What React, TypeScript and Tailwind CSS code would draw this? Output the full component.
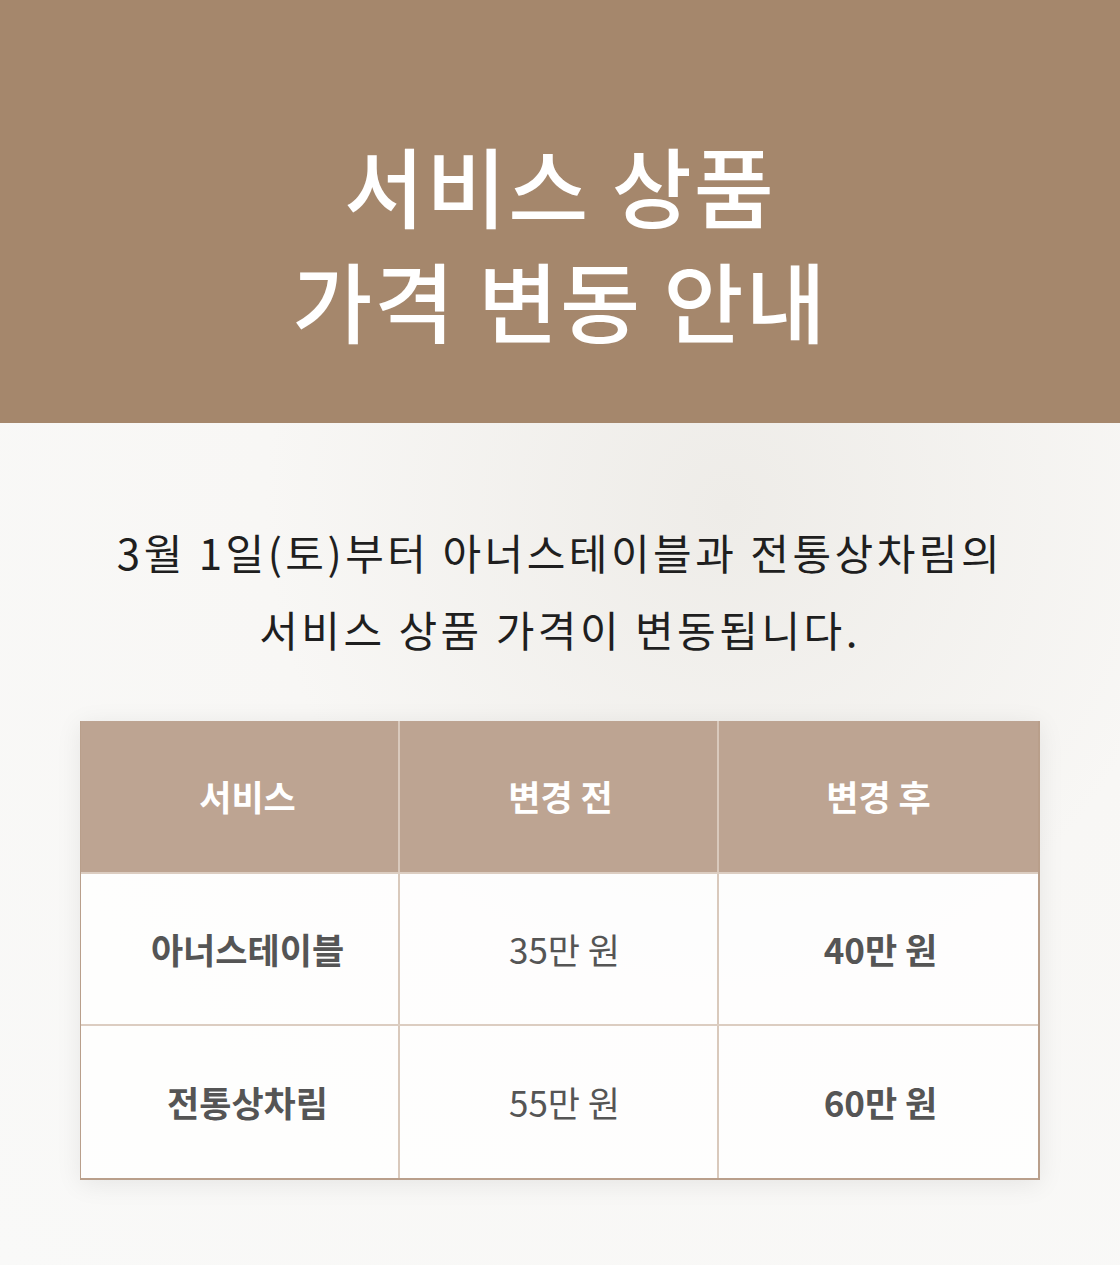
const FONT = { fontFamily: '"Noto Sans CJK KR", "Noto Sans", sans-serif' };

const ROWS = [
  { name: "아너스테이블", before: "35만 원", after: "40만 원" },
  { name: "전통상차림", before: "55만 원", after: "60만 원" },
];

export default function App() {
  return (
    <div className="w-[1120px] min-h-[1265px] bg-[#f7f6f4]" style={FONT}>
      <header className="h-[423px] bg-[#a5876c] flex flex-col items-center justify-center pt-[60px]">
        <h1 className="text-white text-[87px] leading-[115px] font-medium text-center tracking-[2px]">
          서비스 상품
          <br />
          가격 변동 안내
        </h1>
      </header>

      <section className="relative overflow-hidden bg-[radial-gradient(ellipse_at_65%_10%,#eeece8_0%,#f8f7f5_45%,#f9f9f8_100%)] pt-[90px] pb-[85px]">
        <p className="text-center text-[#1f1f1f] text-[42px] leading-[77px] tracking-[3.5px]">
          3월 1일(토)부터 아너스테이블과 전통상차림의
          <br />
          서비스 상품 가격이 변동됩니다.
        </p>

        <div className="mx-[80px] mt-[54px] border-r-2 border-b-2 border-l border-[#b99f8b] shadow-[0_4px_24px_rgba(0,0,0,0.08)]">
          <div className="grid grid-cols-3 bg-[#bda492] text-white text-[35px] font-semibold h-[153px] border-b-2 border-[#dccdc1]">
            <div className="flex items-center justify-center pl-4 border-r-2 border-[#d9c9bc]">서비스</div>
            <div className="flex items-center justify-center pl-1 border-r-2 border-[#d9c9bc]">변경 전</div>
            <div className="flex items-center justify-center">변경 후</div>
          </div>
          {ROWS.map((r, i) => (
            <div
              key={r.name}
              className={`grid grid-cols-3 bg-white/80 text-[#555555] text-[35px] h-[152px] ${i === 0 ? "border-b-2 border-[#dccdc1]" : ""}`}
            >
              <div className="flex items-center justify-center pl-4 border-r-2 border-[#d9c9bc] font-semibold">{r.name}</div>
              <div className="flex items-center justify-center pl-3 border-r-2 border-[#d9c9bc]">{r.before}</div>
              <div className="flex items-center justify-center pl-1 font-semibold">{r.after}</div>
            </div>
          ))}
        </div>
      </section>
    </div>
  );
}
